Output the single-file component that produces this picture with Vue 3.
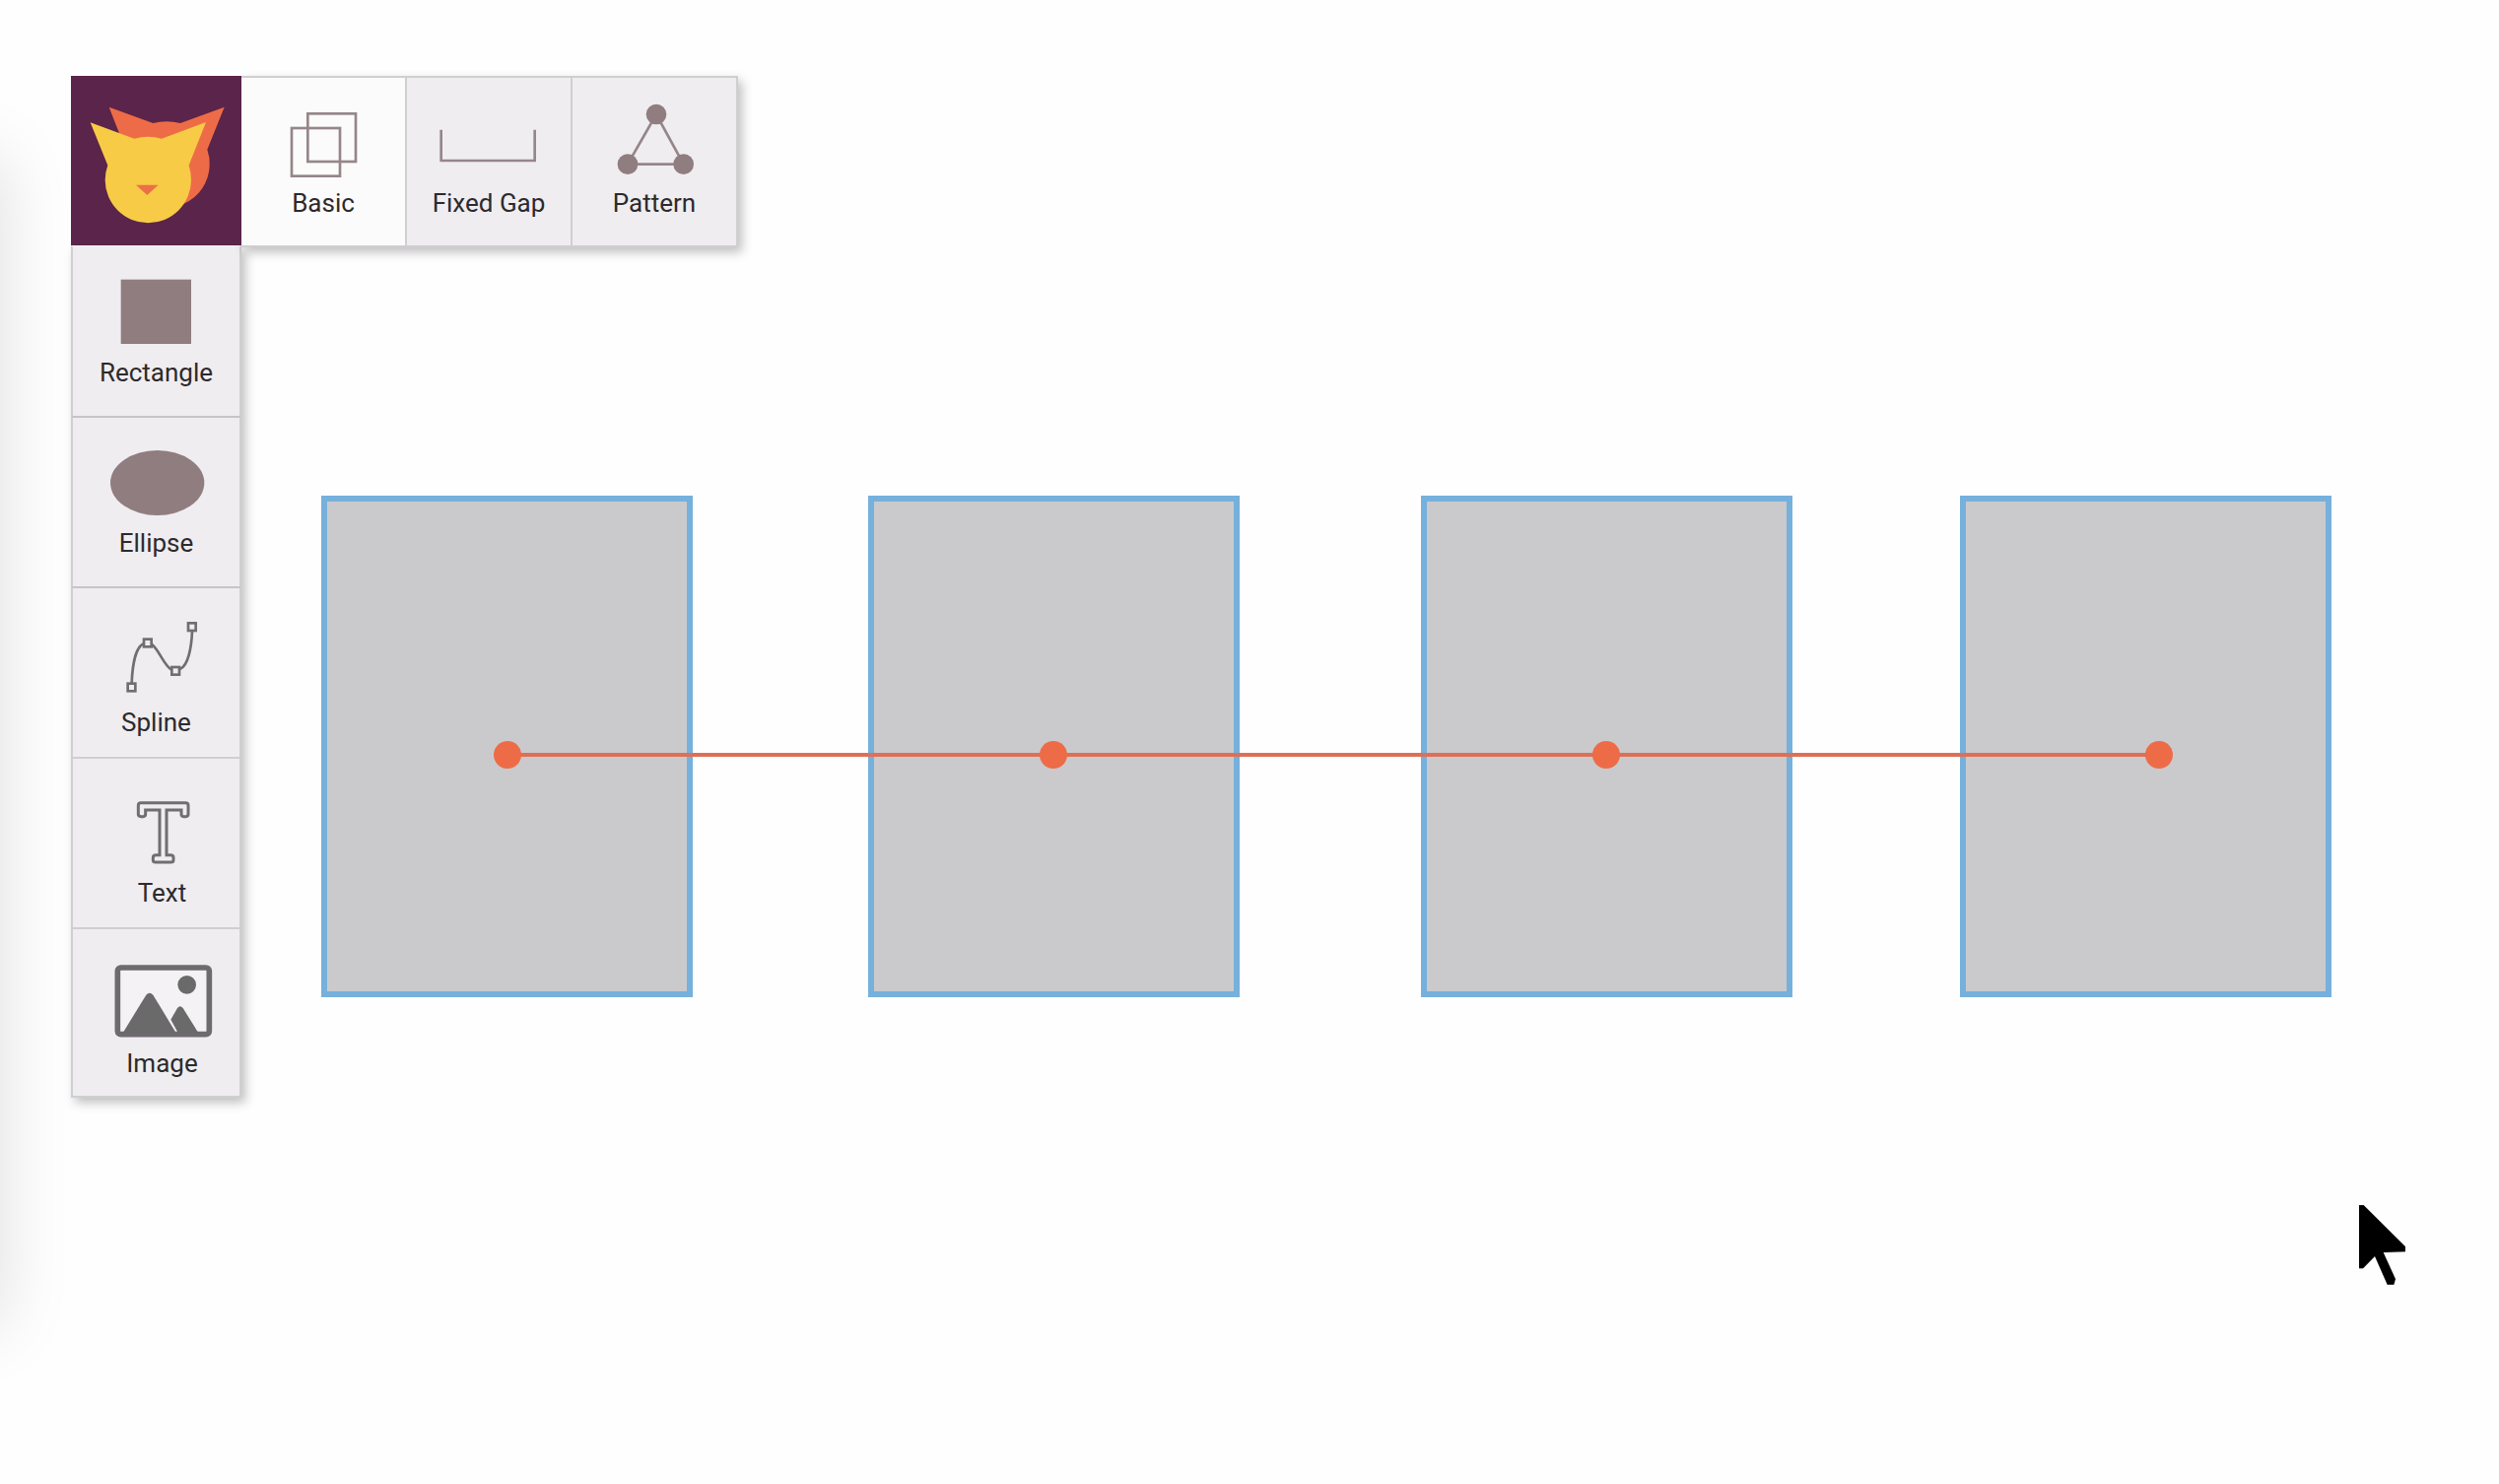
<script setup>
import { ref } from 'vue'

const mode = ref('basic')

const shapes = [
  { x: 326, cx: 515 },
  { x: 881, cx: 1069 },
  { x: 1442, cx: 1630 },
  { x: 1989, cx: 2191 },
]
const midY = 766
</script>

<template>
  <main class="editor">
    <div class="panel-shadow"></div>

    <svg class="canvas" aria-label="Canvas">
      <rect
        v-for="s in shapes"
        :key="s.x"
        class="shape"
        :x="s.x + 3"
        y="506"
        width="371"
        height="503"
      />
      <line class="link" :x1="shapes[0].cx" :y1="midY" :x2="shapes[3].cx" :y2="midY" />
      <circle v-for="s in shapes" :key="s.cx" class="node" :cx="s.cx" :cy="midY" r="14" />
    </svg>

    <div class="tools">
      <header class="top">
        <a class="logo" href="#" aria-label="Home">
          <svg viewBox="36 51 519 516">
            <path
              fill="#ed6c47"
              d="M152 146 L286 195 Q327 184 369 195 L503 146 L451 275 Q460 300 458 325 A131 131 0 0 1 380 440 L220 320 Z"
            />
            <path
              fill="#f7cb45"
              d="M95 193 L229 242 Q271 231 312 242 L447 192 L395 323 Q402 345 402 368 A131 131 0 0 1 140 368 Q140 345 148 323 Z"
            />
            <path fill="#ec7046" d="M234 383 H302 L268 414 Z" />
          </svg>
        </a>
        <nav class="modes">
          <button class="tool" :class="{ active: mode === 'basic' }" @click="mode = 'basic'">
            <svg class="icon" viewBox="117 141 300 240">
              <g class="line">
                <rect x="220" y="166" width="146" height="146" />
                <rect x="171" y="210" width="147" height="146" />
              </g>
            </svg>
            <span>Basic</span>
          </button>
          <button class="tool" :class="{ active: mode === 'gap' }" @click="mode = 'gap'">
            <svg class="icon" viewBox="-159 141 300 240">
              <path class="line" d="M-154 215 V309 H131 V215" />
            </svg>
            <span>Fixed Gap</span>
          </button>
          <button class="tool" :class="{ active: mode === 'pattern' }" @click="mode = 'pattern'">
            <svg class="icon" viewBox="342 141 300 240">
              <path class="line" d="M498 168 L411 320 H581 Z" />
              <g class="solid">
                <circle cx="498" cy="168" r="31" />
                <circle cx="411" cy="320" r="31" />
                <circle cx="581" cy="320" r="31" />
              </g>
            </svg>
            <span>Pattern</span>
          </button>
        </nav>
      </header>

      <nav class="side">
        <button class="tool">
          <svg class="icon" viewBox="146 117 300 240">
            <rect class="solid" x="187" y="131" width="214" height="196" />
          </svg>
          <span>Rectangle</span>
        </button>
        <button class="tool strong">
          <svg class="icon" viewBox="146 96 300 240">
            <ellipse class="solid" cx="298" cy="210" rx="143" ry="99" />
          </svg>
          <span>Ellipse</span>
        </button>
        <button class="tool strong low">
          <svg class="icon" viewBox="146 105 300 240">
            <path
              class="ink"
              stroke-width="8"
              d="M220 310 C222 255 232 200 256 190 M282 192 C305 212 318 255 340 268 M367 267 C392 258 402 200 404 152"
            />
            <g class="ink" stroke-width="8">
              <rect x="208" y="311" width="23" height="23" />
              <rect x="257" y="176" width="23" height="23" />
              <rect x="342" y="261" width="23" height="23" />
              <rect x="392" y="127" width="23" height="23" />
            </g>
          </svg>
          <span>Spline</span>
        </button>
        <button class="tool low shifted">
          <svg class="icon" viewBox="164 114 300 240">
            <path
              class="ink"
              stroke-width="9"
              d="M248 164 H384 Q392 164 392 172 V199 Q392 206 385 206 H378 Q371 206 371 199 V186 H326 V323 H338 Q347 323 347 331 V338 Q347 345 339 345 H293 Q285 345 285 338 V331 Q285 323 294 323 H305 V186 H262 V199 Q262 206 255 206 H248 Q240 206 240 199 V172 Q240 164 248 164 Z"
            />
          </svg>
          <span>Text</span>
        </button>
        <button class="tool low shifted">
          <svg class="icon" viewBox="164 123 300 240">
            <rect x="177" y="156" width="279" height="203" rx="10" fill="#f4f2f5" stroke="#6d6b6d" stroke-width="17" />
            <g fill="#6a6a6a">
              <circle cx="388" cy="208" r="28" />
              <path d="M192 356 L264 239 Q274 227 285 239 L356 356 Z" />
              <path d="M339 314 L359 279 Q367 268 376 279 L424 356 H362 Z" />
            </g>
          </svg>
          <span>Image</span>
        </button>
      </nav>
    </div>

    <svg class="cursor" viewBox="99 66 147 249" aria-hidden="true">
      <path d="M102 69 H116 L243 195 V211 L176 213 L213 294 L208 311 H188 L150 225 L114 262 H102 Z" />
    </svg>
  </main>
</template>

<style>
body {
  margin: 0;
  background: #fefefe;
}
</style>

<style scoped>
.editor {
  position: relative;
  box-sizing: border-box;
  min-height: 100vh;
  padding: 77px 72px;
  overflow: hidden;
  font-family: Roboto, "Liberation Sans", sans-serif;
}
.panel-shadow {
  position: absolute;
  top: 160px;
  bottom: 160px;
  right: 100%;
  width: 200px;
  box-shadow: 0 0 72px rgba(0, 0, 0, 0.13);
}
.canvas {
  position: absolute;
  inset: 0;
  width: 100%;
  height: 100%;
}
.shape {
  fill: #cacacc;
  stroke: #76b0dc;
  stroke-width: 6px;
}
.link {
  stroke: #dd7056;
  stroke-width: 4px;
}
.node {
  fill: #ed6c47;
}
.tools {
  position: relative;
  display: flex;
  flex-direction: column;
  align-items: flex-start;
}
.top {
  position: relative;
  z-index: 1;
  display: flex;
  align-items: flex-start;
  height: 172px;
}
.logo {
  position: relative;
  z-index: 1;
  width: 173px;
  height: 172px;
  background: #5b244a;
}
.logo svg {
  display: block;
  width: 100%;
  height: 100%;
}
.modes,
.side {
  display: flex;
  background: #efedf0;
  box-shadow: 4px 5px 10px rgba(0, 0, 0, 0.25);
}
.side {
  flex-direction: column;
}
.tool {
  display: flex;
  flex-direction: column;
  align-items: center;
  gap: 4px;
  box-sizing: border-box;
  width: 168px;
  height: 173px;
  margin: 0;
  padding: 28px 0 0;
  border: 0 solid #d0ced1;
  border-top-width: 2px;
  background: #efedf0;
  color: #2c2a2d;
  font: 400 26px/30px Roboto, "Liberation Sans", sans-serif;
  white-space: nowrap;
  cursor: pointer;
}
.modes .tool {
  height: 174px;
  border-right-width: 2px;
  border-bottom-width: 2px;
}
.side .tool {
  width: 173px;
  border-left-width: 2px;
  border-right-width: 2px;
}
.side .tool:first-child {
  border-top-color: #efedf0;
}
.side .tool:last-child {
  border-bottom-width: 2px;
}
.side .strong {
  border-top-color: #c6c4c7;
}
.tool.active {
  background: #fcfbfc;
}
.tool.low {
  gap: 13px;
}
.tool.shifted {
  padding-left: 12px;
}
.icon {
  flex: none;
  width: 100px;
  height: 80px;
  overflow: visible;
}
.line {
  fill: none;
  stroke: #958689;
  stroke-width: 8px;
}
.solid {
  fill: #907d80;
}
.ink {
  fill: none;
  stroke: #706e70;
}
.cursor {
  position: absolute;
  top: 1222px;
  left: 2393px;
  width: 49px;
  height: 83px;
}
</style>
